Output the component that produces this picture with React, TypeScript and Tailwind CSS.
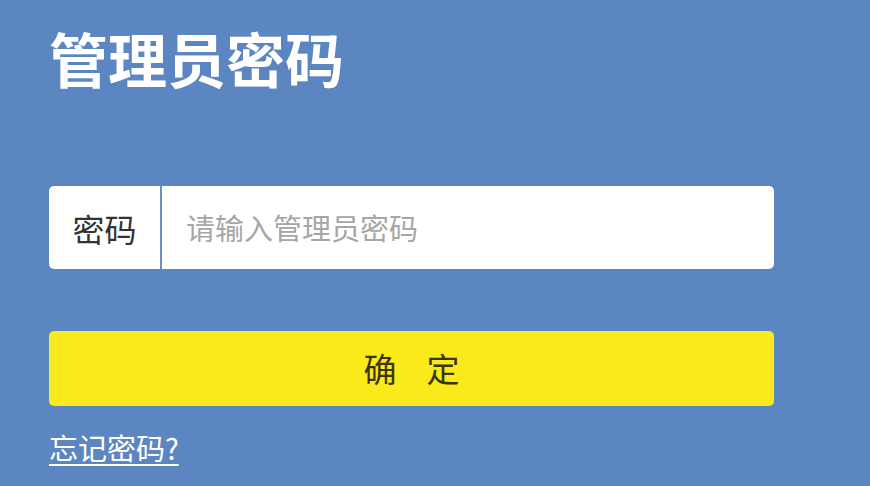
import React from "react";

export default function App() {
  return (
    <div
      className="w-[870px] h-[486px] overflow-hidden bg-[#5c86c1] pl-[49px] pr-[96px]"
      style={{ fontFamily: '"Noto Sans CJK SC", "Noto Sans", sans-serif' }}
    >
      <h1 className="pt-[19px] text-[59px] leading-[78px] font-bold text-white">管理员密码</h1>
      <div className="mt-[89px] flex h-[83px] rounded-[5px] bg-white overflow-hidden">
        <div className="w-[111px] flex items-center justify-center text-[32px] text-[#333333]">密码</div>
        <div className="w-[2px] bg-[#6a8fc4]" />
        <div className="flex-1 flex items-center pl-[24px] text-[29px] text-[#a6a6a6]">请输入管理员密码</div>
      </div>
      <div className="mt-[62px] flex h-[75px] items-center justify-center rounded-[5px] bg-[#fbea1b] text-[33px] text-[#3b3300]">
        <span>确</span>
        <span className="ml-[30px]">定</span>
      </div>
      <div className="mt-[22px] text-[29px] leading-[38px] text-white underline decoration-2 underline-offset-[4px]">忘记密码?</div>
    </div>
  );
}
